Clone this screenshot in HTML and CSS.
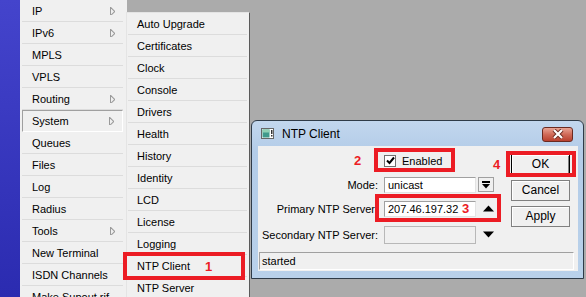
FILE: index.html
```html
<!DOCTYPE html>
<html lang="en">
<head>
    <meta charset="UTF-8">
    <title>NTP Client</title>
    <link rel="stylesheet" href="styles.css">
</head>
<body>
<div class="app">
    <div class="strip"></div>
    <ul class="menu">
        <li>IP<span class="more"></span></li>
        <li>IPv6<span class="more"></span></li>
        <li>MPLS</li>
        <li>VPLS</li>
        <li>Routing<span class="more"></span></li>
        <li class="active">System<span class="more"></span></li>
        <li>Queues</li>
        <li>Files</li>
        <li>Log</li>
        <li>Radius</li>
        <li>Tools<span class="more"></span></li>
        <li>New Terminal</li>
        <li>ISDN Channels</li>
        <li>Make Supout.rif</li>
    </ul>
    <div class="desk">
        <ul class="submenu">
            <li>Auto Upgrade</li>
            <li>Certificates</li>
            <li>Clock</li>
            <li>Console</li>
            <li>Drivers</li>
            <li>Health</li>
            <li>History</li>
            <li>Identity</li>
            <li>LCD</li>
            <li>License</li>
            <li>Logging</li>
            <li>NTP Client</li>
            <li>NTP Server</li>
        </ul>

        <div class="dialog">
            <div class="titlebar">
                <svg class="win_icon" width="13" height="11" viewBox="0 0 13 11">
                    <rect x="0.5" y="0.5" width="12" height="10" fill="#fff" stroke="#666"/>
                    <rect x="1.5" y="1.5" width="7" height="8" fill="#3f9a8c"/>
                    <rect x="1.5" y="1.5" width="7" height="3" fill="#8fd0b4"/>
                    <rect x="10" y="2" width="1.5" height="4" fill="#333"/>
                    <rect x="10" y="7" width="1.5" height="1.5" fill="#333"/>
                </svg>
                <span class="title">NTP Client</span>
                <span class="close">
                    <svg width="14" height="10" viewBox="0 0 14 10">
                        <path d="M3 1 L11 9 M11 1 L3 9" stroke="#6b2a20" stroke-width="4"/>
                        <path d="M3 1 L11 9 M11 1 L3 9" stroke="#fff" stroke-width="2.2"/>
                    </svg>
                </span>
            </div>
            <div class="content">
                <div class="main">
                    <div class="form">
                        <div class="row">
                            <span class="label"></span>
                            <span class="check">
                                <svg width="9" height="9" viewBox="0 0 9 9"><path d="M1 4.5 L3.5 7 L8 1.5" stroke="#000" stroke-width="2" fill="none"/></svg>
                            </span>
                            <span>Enabled</span>
                        </div>
                        <div class="row">
                            <span class="label">Mode:</span>
                            <span class="field">unicast</span>
                            <span class="drop">
                                <svg width="8" height="8" viewBox="0 0 8 8"><rect x="0" y="0" width="8" height="2" fill="#000"/><polygon points="0,3 8,3 4,7.5" fill="#000"/></svg>
                            </span>
                        </div>
                        <div class="row">
                            <span class="label">Primary NTP Server:</span>
                            <span class="field">207.46.197.32</span>
                            <span class="arrow">
                                <svg width="11" height="7" viewBox="0 0 11 7"><polygon points="0,6.5 11,6.5 5.5,0.5" fill="#000"/></svg>
                            </span>
                        </div>
                        <div class="row row_last">
                            <span class="label">Secondary NTP Server:</span>
                            <span class="field field_off"></span>
                            <span class="arrow">
                                <svg width="11" height="7" viewBox="0 0 11 7"><polygon points="0,0.5 11,0.5 5.5,6.5" fill="#000"/></svg>
                            </span>
                        </div>
                    </div>
                    <div class="buttons">
                        <span class="btn btn_default">OK</span>
                        <span class="btn">Cancel</span>
                        <span class="btn">Apply</span>
                    </div>
                </div>
                <div class="status">started</div>
            </div>
        </div>
    </div>
</div>

<!--标注-->
<div class="mark mark1"></div>
<span class="num num1">1</span>
<div class="mark mark2"></div>
<span class="num num2">2</span>
<div class="mark mark3"></div>
<span class="num num3">3</span>
<div class="mark mark4"></div>
<span class="num num4">4</span>
</body>
</html>
```

FILE: styles.css
```css
* {
    margin: 0;
    padding: 0;
    list-style: none;
    border: none;
    box-sizing: border-box;
}

body {
    width: 586px;
    height: 297px;
    overflow: hidden;
    font-family: "Liberation Sans", Arial, sans-serif;
    font-size: 11px;
    color: #000;
    position: relative;
}

.app {
    display: flex;
    height: 297px;
}

.strip {
    width: 20px;
    background: linear-gradient(#4444cc, #2b2bb0);
}

/* 左边主菜单 */
.menu {
    width: 107px;
    background: #f0f0f0;
    padding-left: 2px;
}

.menu li {
    height: 22px;
    line-height: 21px;
    padding-top: 1px;
    padding-left: 10px;
    border-bottom: 1px solid #dcdcdc;
    display: flex;
    align-items: center;
    width: 101px;
}

.menu li.active {
    border: 1px solid #a0a0a0;
    border-right-color: #fff;
    border-bottom-color: #fff;
    padding-left: 9px;
    padding-top: 0;
}

.more {
    margin-left: auto;
    margin-right: 8px;
    width: 5px;
    height: 8px;
    border-left: 1px solid #9a9a9a;
    position: relative;
    overflow: hidden;
}

.more:after {
    content: "";
    position: absolute;
    left: -4px;
    top: 1px;
    width: 6px;
    height: 6px;
    border-top: 1px solid #9a9a9a;
    border-right: 1px solid #9a9a9a;
    transform: rotate(45deg);
}

.desk {
    flex: 1;
    background: #ababab;
    position: relative;
}

/* 子菜单 */
.submenu {
    position: absolute;
    left: -1px;
    top: 12px;
    width: 124px;
    background: #f0f0f0;
    border-top: 1px solid #e4e4e4;
    border-left: 1px solid #e4e4e4;
    border-right: 1px solid #5a5a5a;
    padding: 0 2px 0 1px;
}

.submenu li {
    height: 22px;
    line-height: 21px;
    padding-top: 1px;
    padding-left: 9px;
    border-bottom: 1px solid #dcdcdc;
}

/* 对话框 */
.dialog {
    position: absolute;
    left: 124px;
    top: 120px;
    width: 333px;
    height: 159px;
    border: 1px solid #2f3b48;
    border-radius: 6px 6px 0 0;
    background: linear-gradient(#c2d7ee, #b3cce8 30px, #b9d1ea);
}

.titlebar {
    height: 25px;
    display: flex;
    align-items: center;
    padding-left: 9px;
}

.title {
    margin-left: 8px;
    font-size: 12px;
}

.close {
    margin-left: auto;
    margin-right: 10px;
    margin-top: 1px;
    width: 31px;
    height: 15px;
    border: 1px solid #6b2a20;
    border-radius: 3px;
    background: linear-gradient(#e9a494, #d06a58 50%, #b8402e);
    display: flex;
    align-items: center;
    justify-content: center;
}

.content {
    margin: 0 5px 0 6px;
    height: 125px;
    background: #f0f0f0;
    display: flex;
    flex-direction: column;
}

.main {
    display: flex;
    padding-top: 6px;
}

.form {
    display: flex;
    flex-direction: column;
    gap: 7px;
}

.row {
    display: flex;
    align-items: center;
    height: 17px;
}

.row_last {
    margin-top: 2px;
}

.label {
    width: 120px;
    text-align: right;
    margin-right: 6px;
}

.check {
    width: 12px;
    height: 12px;
    border: 1px solid #707070;
    background: #fff;
    display: flex;
    align-items: center;
    justify-content: center;
    margin-right: 6px;
}

.field {
    width: 92px;
    height: 16px;
    line-height: 14px;
    background: #fff;
    border: 1px solid #a0a0a0;
    border-bottom-color: #e3e3e3;
    border-right-color: #e3e3e3;
    padding-left: 3px;
    font-size: 11px;
}

.field_off {
    height: 18px;
    background: #f0f0f0;
    border: 1px solid #b8b8b8;
}

.drop {
    width: 16px;
    height: 15px;
    margin-left: 2px;
    border: 1px solid #a0a0a0;
    display: flex;
    align-items: center;
    justify-content: center;
}

.arrow {
    width: 16px;
    margin-left: 4px;
    display: flex;
    justify-content: center;
}

.buttons {
    margin-left: auto;
    margin-right: 8px;
    padding-top: 2px;
    display: flex;
    flex-direction: column;
    gap: 5px;
}

.btn {
    width: 59px;
    height: 21px;
    line-height: 19px;
    text-align: center;
    font-size: 12px;
    border: 1px solid #808080;
    background: #f0f0f0;
    box-shadow: inset 1px 1px #fff;
}

.btn_default {
    border: 1px solid #000;
    box-shadow: inset 1px 1px #fff, inset -1px -1px #808080;
}

.status {
    margin: auto 4px 1px 1px;
    height: 18px;
    line-height: 16px;
    padding-left: 2px;
    border: 1px solid #a0a0a0;
    border-right-color: #fff;
    border-bottom-color: #fff;
}

/* 红色标注 */
.mark {
    position: absolute;
    border: 4px solid #ec1c24;
}

.mark1 {
    left: 123px;
    top: 252px;
    width: 122px;
    height: 28px;
}

.mark2 {
    left: 374px;
    top: 148px;
    width: 81px;
    height: 24px;
}

.mark3 {
    left: 375px;
    top: 194px;
    width: 126px;
    height: 28px;
}

.mark4 {
    left: 506px;
    top: 151px;
    width: 70px;
    height: 26px;
}

.num {
    position: absolute;
    color: #ec1c24;
    font-size: 13px;
    font-weight: bold;
    line-height: 14px;
}

.num1 {
    left: 205px;
    top: 260px;
}

.num2 {
    left: 354px;
    top: 154px;
}

.num3 {
    left: 462px;
    top: 202px;
}

.num4 {
    left: 493px;
    top: 158px;
}
```
